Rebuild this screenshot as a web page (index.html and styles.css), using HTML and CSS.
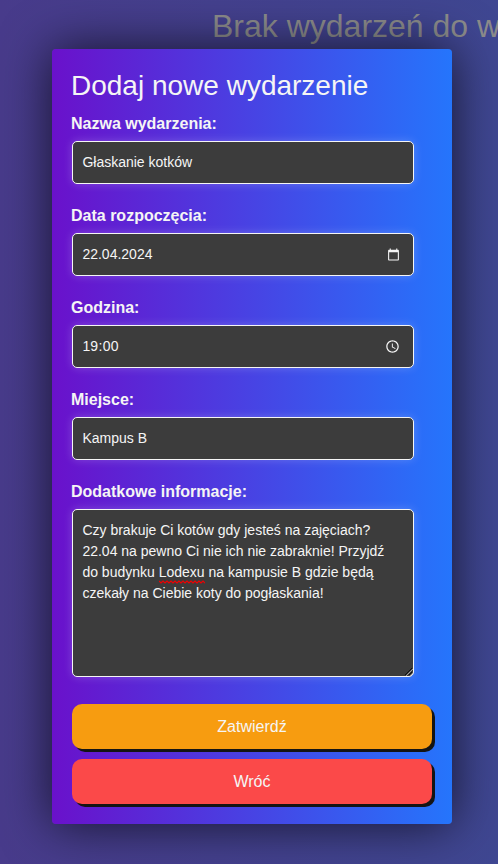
FILE: index.html
```html
<!DOCTYPE html>
<html lang="pl">
<head>
<meta charset="utf-8">
<title>Dodaj nowe wydarzenie</title>
<link rel="stylesheet" href="styles.css">
</head>
<body>
<h1 class="empty">Brak wydarzeń do wyświetlenia</h1>
<main class="modal">
  <h2 class="title">Dodaj nowe wydarzenie</h2>
  <div class="group">
    <div class="label">Nazwa wydarzenia:</div>
    <div class="field"><span>Głaskanie kotków</span></div>
  </div>
  <div class="group">
    <div class="label">Data rozpoczęcia:</div>
    <div class="field"><span>22.04.2024</span>
      <svg class="icon calendar" viewBox="0 0 24 24"><path d="M20 3h-1V1h-2v2H7V1H5v2H4c-1.100 0-2 .9-2 2v16c0 1.100.9 2 2 2h16c1.100 0 2-.9 2-2V5c0-1.100-.9-2-2-2zm0 18H4V8h16v13z"/></svg>
    </div>
  </div>
  <div class="group">
    <div class="label">Godzina:</div>
    <div class="field"><span>19<span class="colon">:</span>00</span>
      <svg class="icon clock" viewBox="0 0 24 24"><path d="M11.990 2C6.470 2 2 6.480 2 12s4.470 10 9.990 10C17.520 22 22 17.520 22 12S17.520 2 11.990 2zM12 20c-4.420 0-8-3.580-8-8s3.580-8 8-8 8 3.580 8 8-3.580 8-8 8zm.5-13H11v6l5.250 3.150.75-1.230-4.500-2.670z"/></svg>
    </div>
  </div>
  <div class="group">
    <div class="label">Miejsce:</div>
    <div class="field"><span>Kampus B</span></div>
  </div>
  <div class="group">
    <div class="label">Dodatkowe informacje:</div>
    <div class="field area">Czy brakuje Ci kotów gdy jesteś na zajęciach?<br>22.04 na pewno Ci nie ich nie zabraknie! Przyjdź<br>do budynku <span class="typo">Lodexu<svg class="wave" viewBox="0 0 46 4"><path d="M0 1l2 2 2-2 2 2 2-2 2 2 2-2 2 2 2-2 2 2 2-2 2 2 2-2 2 2 2-2 2 2 2-2 2 2 2-2 2 2 2-2 2 2 2-2 2 2 2-2"/></svg></span> na kampusie B gdzie będą<br>czekały na Ciebie koty do pogłaskania!
      <svg class="grip" viewBox="0 0 8 8"><path class="dark" d="M0 7L7 0M4 7L7 4"/><path class="light" d="M1 8L8 1M5 8L8 5"/></svg>
    </div>
  </div>
  <div class="actions">
    <div class="button confirm">Zatwierdź</div>
    <div class="button back">Wróć</div>
  </div>
</main>
</body>
</html>
```
FILE: styles.css
```css
* { box-sizing: border-box; }

body {
  margin: 0;
  height: 864px;
  overflow: hidden;
  background: linear-gradient(to right, #483b8b, #3f4792);
  font-family: "Liberation Sans", Arial, sans-serif;
  color: #f5f5f5;
}

.empty {
  margin: 0 0 0 212px;
  height: 49px;
  padding-top: 8px;
  overflow: hidden;
  font-size: 32px;
  line-height: 37px;
  font-weight: 400;
  white-space: nowrap;
  color: #8c8c8c;
}

.modal {
  position: relative;
  width: 400px;
  height: 775px;
  margin-left: 52px;
  padding: 20px;
  border-radius: 4px;
  background: linear-gradient(to right, #6a11cb, #2575fc);
  box-shadow: 0 0 50px rgba(0, 0, 0, 0.7);
}

.title {
  margin: 0 0 8px -1px;
  height: 34px;
  font-size: 28px;
  line-height: 34px;
  font-weight: 400;
  white-space: nowrap;
}

.label {
  height: 30px;
  margin-left: -1px;
  padding-top: 4px;
  font-size: 16px;
  line-height: 18px;
  font-weight: 700;
}

.field {
  display: flex;
  align-items: center;
  justify-content: space-between;
  width: 342px;
  height: 43px;
  margin-bottom: 19px;
  padding: 0 13px 0 9.4px;
  border: 1px solid #f5f5f5;
  border-radius: 5px;
  background: #3c3c3c;
  box-shadow: 0 0 10px rgba(255, 255, 255, 0.2);
  font-size: 14px;
  line-height: 21px;
}

.colon { padding: 0 0.5px; }

.icon { fill: #f5f5f5; }
.calendar { width: 13px; height: 13px; }
.clock { width: 15px; height: 15px; }

.area {
  display: block;
  position: relative;
  height: 168px;
  margin-bottom: 27px;
  padding: 10px 9.4px;
  white-space: nowrap;
}

.typo { position: relative; }

.wave {
  position: absolute;
  left: 0;
  bottom: -4px;
  width: 46px;
  height: 4px;
  fill: none;
  stroke: #f00000;
  stroke-width: 1.2;
}

.grip {
  position: absolute;
  right: 0;
  bottom: 0;
  width: 8px;
  height: 8px;
  fill: none;
}

.dark { stroke: #111; }
.light { stroke: #ccc; stroke-width: 0.7; }

.actions {
  display: grid;
  gap: 10px;
}

.button {
  height: 45px;
  border-radius: 10px;
  box-shadow: 3px 3px 0 #141414;
  font-size: 16px;
  line-height: 45px;
  text-align: center;
}

.confirm { background: #f79c10; }
.back { background: #fb4949; }
```
